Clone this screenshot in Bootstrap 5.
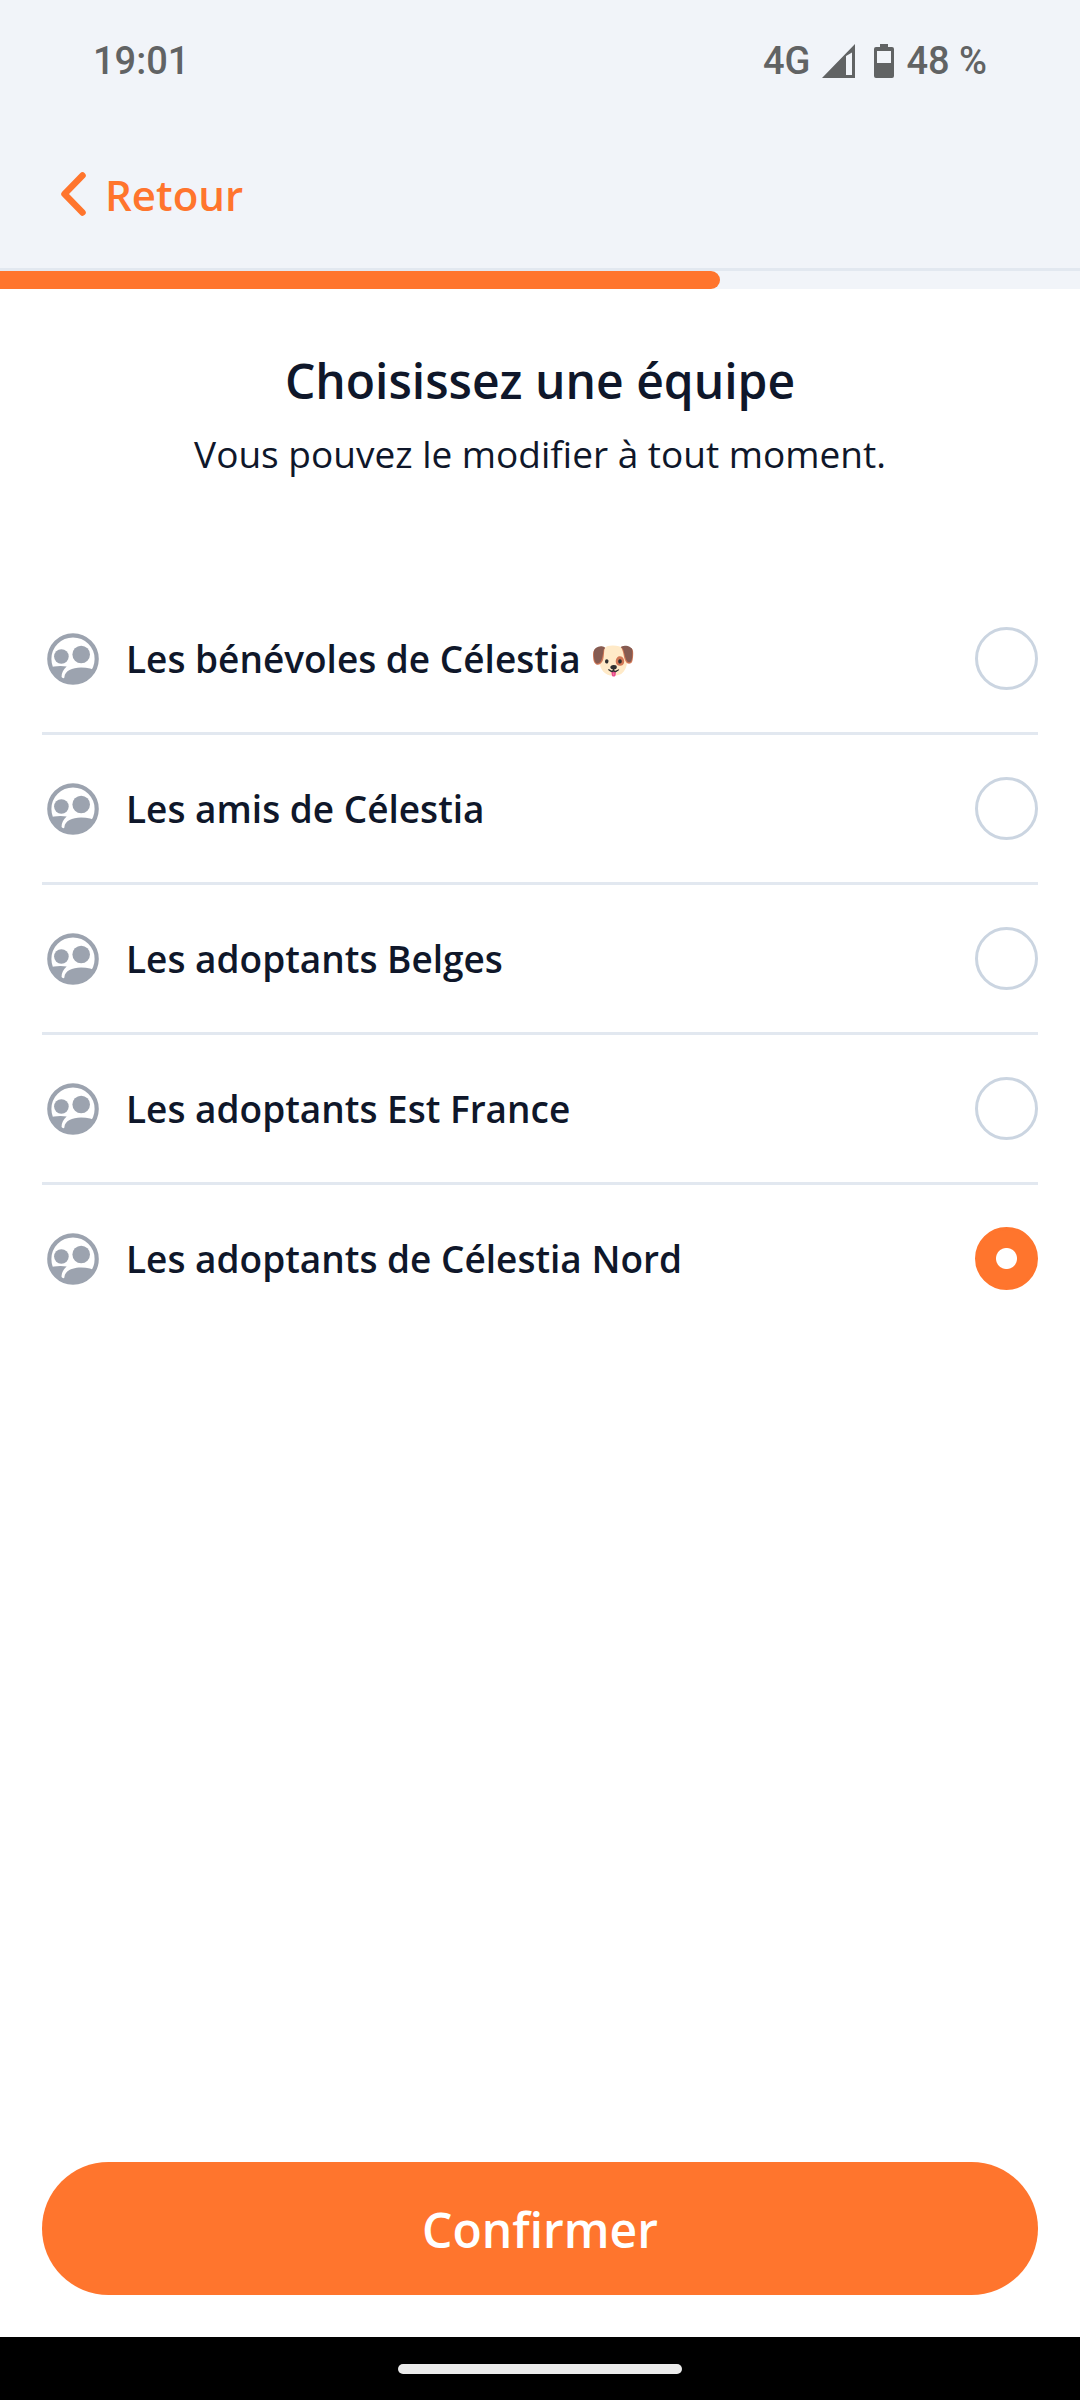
<!DOCTYPE html>
<html lang="fr">
<head>
<meta charset="utf-8">
<meta name="viewport" content="width=device-width, initial-scale=1">
<title>Choisissez une équipe</title>
<link href="https://cdn.jsdelivr.net/npm/bootstrap@5.3.0/dist/css/bootstrap.min.css" rel="stylesheet">
<style>
:root { --accent: #ff752d; --ink: #0f172a; --line: #e2e8f0; }
body { font-family: "Open Sans", "Noto Sans", sans-serif; color: var(--ink); }
.app-head { background: #f1f4f9; border-bottom: 3px solid var(--line); }
.status-bar { height: 120px; padding: 2px 93px 0; font: 500 38px/48px Roboto, sans-serif; color: #616364; }
.status-bar .signal { margin: 0 19px 0 12px; }
.status-bar .battery { margin-right: 12px; }
.back-row { height: 148px; padding: 0 60px; }
.back-link { color: var(--accent); font-size: 42px; line-height: 56px; font-weight: 600; gap: 17px; }
.back-link span { padding-top: 2px; }
.step-track { height: 18px; border-radius: 0; background: #f1f4f9; }
.step-track .progress-bar { background: var(--accent); border-radius: 0 9px 9px 0; }
.page-title { font-size: 48px; line-height: 64px; font-weight: 600; margin-bottom: 14px; }
.page-sub { font-size: 37px; line-height: 54px; }
.side-pad { padding-left: 42px; padding-right: 42px; }
.intro { padding-top: 60px; padding-bottom: 104px; }
.team-row { height: 150px; border-bottom: 3px solid var(--line); }
.team-row:last-child { border-color: transparent; }
.team-row label { font-size: 37px; line-height: 48px; font-weight: 600; gap: 24px; }
.team-row .form-check-input { width: 63px; height: 63px; border: 3px solid #cbd5e1; }
.team-row .form-check-input:checked { background-color: var(--accent); border-color: var(--accent);
  background-image: radial-gradient(circle, #fff 10px, transparent 11px); }
.btn-confirm { height: 133px; padding: 8px 12px 6px; background: var(--accent); color: #fff; font-size: 48px; line-height: 64px; font-weight: 600; margin-bottom: 42px; }
.nav-strip { height: 63px; }
.nav-handle { width: 284px; height: 10px; border-radius: 5px; background: #ebebeb; }
</style>
<script src="https://cdn.jsdelivr.net/npm/bootstrap@5.3.0/dist/js/bootstrap.bundle.min.js"></script>
</head>
<body class="d-flex flex-column min-vh-100 bg-white">
<svg class="position-absolute" width="0" height="0" aria-hidden="true">
  <symbol id="team" viewBox="0 0 52 52">
    <clipPath id="disc"><circle cx="26" cy="26" r="25"/></clipPath>
    <circle cx="26" cy="26" r="23.7" fill="none" stroke="#9ca3af" stroke-width="4.2"/>
    <circle cx="14.4" cy="23.5" r="7.3" fill="#9ca3af"/>
    <circle cx="34.2" cy="21.5" r="8.8" fill="#9ca3af"/>
    <g clip-path="url(#disc)" fill="#9ca3af">
      <path d="M0 36C6 33 13 32.500 19.700 33.600C16.500 36.500 14.500 39.500 14.500 44.500C16 46 17.200 46 17.400 44C18 38 25 34.500 34 34.500C41 34.500 47 36 52 40V52H0Z"/>
    </g>
  </symbol>
</svg>
<header class="app-head">
  <div class="status-bar d-flex justify-content-between align-items-center">
    <span>19:01</span>
    <div class="d-flex align-items-center">
      <span>4G</span>
      <svg class="signal" width="33" height="34" viewBox="0 0 33 34" fill="#616364" aria-hidden="true"><path fill-rule="evenodd" d="M0 34L33 0V34ZM24 12V31H30V8.500Z"/></svg>
      <svg class="battery" width="20" height="34" viewBox="0 0 20 34" fill="#616364" aria-hidden="true"><path fill-rule="evenodd" d="M6 0H14V3H18Q20 3 20 5V32Q20 34 18 34H2Q0 34 0 32V5Q0 3 2 3H6ZM3 7V19H17V7Z"/></svg>
      <span>48 %</span>
    </div>
  </div>
  <nav class="back-row d-flex align-items-center">
    <a class="back-link d-flex align-items-center text-decoration-none" href="#">
      <svg width="28" height="44" viewBox="0 0 28 44" fill="none" stroke="#ff752d" stroke-width="6.500" stroke-linecap="round" stroke-linejoin="round" aria-hidden="true"><path d="M22.500 3.500L4.500 22L22.500 40.500"/></svg>
      <span>Retour</span>
    </a>
  </nav>
</header>
<div class="progress step-track" role="progressbar" aria-label="Progression" aria-valuenow="67" aria-valuemin="0" aria-valuemax="100">
  <div class="progress-bar" style="width: 66.67%"></div>
</div>
<main class="side-pad d-flex flex-column flex-grow-1">
  <div class="intro text-center">
    <h1 class="page-title">Choisissez une équipe</h1>
    <p class="page-sub mb-0">Vous pouvez le modifier à tout moment.</p>
  </div>
  <form class="d-flex flex-column flex-grow-1">
    <div>
      <div class="team-row d-flex align-items-center">
        <label class="d-flex align-items-center flex-grow-1 ps-1" for="t1"><svg width="56" height="52" viewBox="0 0 56 52" aria-hidden="true"><use href="#team" x="1" width="52" height="52"/></svg><span>Les bénévoles de Célestia 🐶</span></label>
        <input class="form-check-input m-0" type="radio" name="team" id="t1">
      </div>
      <div class="team-row d-flex align-items-center">
        <label class="d-flex align-items-center flex-grow-1 ps-1" for="t2"><svg width="56" height="52" viewBox="0 0 56 52" aria-hidden="true"><use href="#team" x="1" width="52" height="52"/></svg><span>Les amis de Célestia</span></label>
        <input class="form-check-input m-0" type="radio" name="team" id="t2">
      </div>
      <div class="team-row d-flex align-items-center">
        <label class="d-flex align-items-center flex-grow-1 ps-1" for="t3"><svg width="56" height="52" viewBox="0 0 56 52" aria-hidden="true"><use href="#team" x="1" width="52" height="52"/></svg><span>Les adoptants Belges</span></label>
        <input class="form-check-input m-0" type="radio" name="team" id="t3">
      </div>
      <div class="team-row d-flex align-items-center">
        <label class="d-flex align-items-center flex-grow-1 ps-1" for="t4"><svg width="56" height="52" viewBox="0 0 56 52" aria-hidden="true"><use href="#team" x="1" width="52" height="52"/></svg><span>Les adoptants Est France</span></label>
        <input class="form-check-input m-0" type="radio" name="team" id="t4">
      </div>
      <div class="team-row d-flex align-items-center">
        <label class="d-flex align-items-center flex-grow-1 ps-1" for="t5"><svg width="56" height="52" viewBox="0 0 56 52" aria-hidden="true"><use href="#team" x="1" width="52" height="52"/></svg><span>Les adoptants de Célestia Nord</span></label>
        <input class="form-check-input m-0" type="radio" name="team" id="t5" checked>
      </div>
    </div>
    <button class="btn btn-confirm rounded-pill w-100 mt-auto" type="submit">Confirmer</button>
  </form>
</main>
<footer class="nav-strip bg-black d-flex align-items-center justify-content-center"><div class="nav-handle"></div></footer>
</body>
</html>
